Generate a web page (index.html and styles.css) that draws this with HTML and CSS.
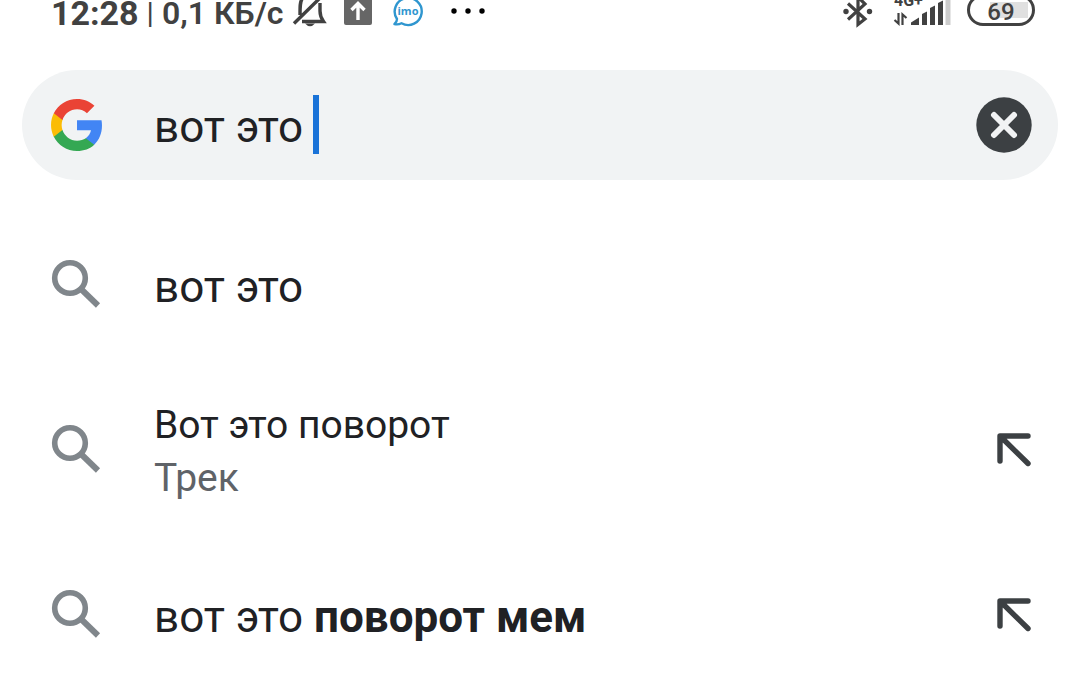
FILE: index.html
```html
<!DOCTYPE html>
<html lang="ru">
<head>
  <meta charset="UTF-8">
  <meta name="viewport" content="width=device-width, initial-scale=1.0">
  <title>вот это</title>
  <link rel="stylesheet" href="styles.css">
</head>
<body>
  <svg class="sprite" aria-hidden="true">
    <symbol id="search" viewBox="0 0 50 50">
      <circle cx="19" cy="19" r="15.3" fill="none" stroke="#80868b" stroke-width="5.6"/>
      <path d="M30.5 30.5L47 46.5" fill="none" stroke="#80868b" stroke-width="6"/>
    </symbol>
    <symbol id="insert" viewBox="0 0 36 36">
      <path d="M4 30V5H32M4.5 5.5L32 32.5" fill="none" stroke="#3c4043" stroke-width="5.4" stroke-linecap="round" stroke-linejoin="round"/>
    </symbol>
  </svg>

  <header class="status">
    <div class="status-left">
      <span class="time">12:28</span>
      <span class="divider">|</span>
      <span class="speed">0,1 КБ/с</span>
      <svg class="bell" width="36" height="28" viewBox="0 0 36 28" fill="none" stroke="#414141" stroke-width="3.4">
        <path d="M2 23.5L28-2M28 3V11C28 15 29 18 31.5 21.5H10M10-1C8 2 8 6 8 15"/>
        <path d="M13 23.5H23Q18 29 13 23.5Z" fill="#414141" stroke="none"/>
      </svg>
      <svg class="upload" width="28" height="28" viewBox="0 0 28 28">
        <rect y="-3" width="28" height="28" rx="2" fill="#666"/>
        <path d="M14 20V4M7.5 10L14 3.5L20.5 10" fill="none" stroke="#fff" stroke-width="3.4"/>
      </svg>
      <svg class="imo" width="32" height="28" viewBox="0 0 32 28">
        <path d="M5 19A13.5 13.5 0 1 1 9.5 23.2Q6 25 2.5 24Q5 22 5 19Z" fill="none" stroke="#2f96cf" stroke-width="2.4" stroke-linejoin="round"/>
        <text x="16" y="15" text-anchor="middle" class="imo-text">imo</text>
      </svg>
      <svg class="dots" width="36" height="28" viewBox="0 0 36 28">
        <circle cx="4" cy="11" r="2.7"/>
        <circle cx="18" cy="11" r="2.7"/>
        <circle cx="32" cy="11" r="2.7"/>
      </svg>
    </div>
    <div class="status-right">
      <svg width="30" height="28" viewBox="0 0 30 28">
        <path d="M5 3.5L22 19L15 24.5V-3L22 4L5 19.5" fill="none" stroke="#414141" stroke-width="3.2"/>
        <circle cx="3" cy="11.5" r="2.7" fill="#414141"/>
        <circle cx="26.5" cy="11.5" r="2.7" fill="#414141"/>
      </svg>
      <svg class="signal" width="58" height="28" viewBox="0 0 58 28" fill="#414141">
        <text x="1" y="6" class="net">4G+</text>
        <path d="M5.5 13V23.5L1.5 20M9.500 25V14.500L13.5 18" fill="none" stroke="#414141" stroke-width="2.2"/>
        <path d="M18 25V22.5L26 17.5V25ZM29 25V14L34 11.5V25ZM37 25V8L42 5.5V25ZM45 25V3L50 0.5V25Z"/>
        <path d="M52.500 0H57.500V25H52.500Z" fill="#ccc"/>
      </svg>
      <div class="battery">69</div>
    </div>
  </header>

  <main>
    <form class="search" role="search">
      <svg class="google" width="51" height="52" viewBox="1 1 21.56 22" aria-hidden="true">
        <path d="M22.56 12.25c0-.78-.07-1.53-.2-2.25H12v4.26h5.92c-.26 1.37-1.04 2.53-2.21 3.31v2.77h3.57c2.08-1.92 3.28-4.74 3.28-8.09z" fill="#4285f4"/>
        <path d="M12 23c2.97 0 5.46-.98 7.28-2.66l-3.57-2.77c-.98.66-2.23 1.06-3.71 1.06-2.86 0-5.29-1.93-6.16-4.53H2.18v2.84C3.99 20.53 7.7 23 12 23z" fill="#34a853"/>
        <path d="M5.84 14.09c-.22-.66-.35-1.36-.35-2.09s.13-1.43.35-2.09V7.07H2.18C1.43 8.55 1 10.22 1 12s.43 3.45 1.18 4.93l3.66-2.84z" fill="#fbbc05"/>
        <path d="M12 5.38c1.62 0 3.06.56 4.21 1.64l3.15-3.15C17.45 2.09 14.97 1 12 1 7.7 1 3.99 3.47 2.18 7.07l3.66 2.84c.87-2.6 3.3-4.53 6.16-4.53z" fill="#ea4335"/>
      </svg>
      <div class="field">
        <input type="text" value="вот это " aria-label="Поиск" autocomplete="off">
        <span class="caret"></span>
      </div>
      <button class="clear" type="reset" aria-label="Очистить">
        <svg width="56" height="56" viewBox="0 0 56 56">
          <circle cx="28" cy="28" r="27.7" fill="#3c4043"/>
          <path d="M18 18L38 38M38 18L18 38" stroke="#f1f3f4" stroke-width="6" stroke-linecap="round"/>
        </svg>
      </button>
    </form>

    <ul class="results">
      <li>
        <svg class="icon" aria-hidden="true"><use href="#search"/></svg>
        <a href="#" class="query">вот это</a>
      </li>
      <li>
        <svg class="icon" aria-hidden="true"><use href="#search"/></svg>
        <a href="#" class="entity">Вот это поворот<span>Трек</span></a>
        <button class="insert" type="button" aria-label="Вставить запрос"><svg><use href="#insert"/></svg></button>
      </li>
      <li>
        <svg class="icon" aria-hidden="true"><use href="#search"/></svg>
        <a href="#" class="query">вот это <b>поворот мем</b></a>
        <button class="insert" type="button" aria-label="Вставить запрос"><svg><use href="#insert"/></svg></button>
      </li>
    </ul>
  </main>
</body>
</html>
```
FILE: styles.css
```css
* {
  box-sizing: border-box;
}

html {
  overflow: hidden;
}

body {
  margin: 0;
  background: #fff;
  color: #202124;
  font-family: Roboto, sans-serif;
}

button {
  padding: 0;
  border: none;
  background: none;
  cursor: pointer;
}

svg {
  display: block;
  flex-shrink: 0;
}

.sprite {
  position: absolute;
  width: 0;
  height: 0;
}

/* status bar */
.status {
  display: flex;
  justify-content: space-between;
  height: 28px;
  margin-bottom: 42px;
  padding: 0 45px 0 51px;
  color: #414141;
}

.status-left,
.status-right {
  display: flex;
  align-items: center;
  line-height: 26px;
}

.status-left {
  font-size: 32px;
  font-weight: bold;
}

.status-left span {
  padding-bottom: 2px;
}

.time {
  font-size: 34px;
}

.divider {
  margin: 0 8px;
  font-size: 30px;
  font-weight: normal;
}

.speed {
  font-weight: 600;
}

.bell {
  margin-left: 8px;
}

.upload {
  margin-left: 16px;
}

.imo {
  margin-left: 20px;
}

.imo-text {
  fill: #2f96cf;
  font: bold 11px "Open Sans", sans-serif;
}

.dots {
  margin-left: 26px;
  fill: #000;
}

.signal {
  margin: 0 16px 0 20px;
}

.net {
  font: bold 16px Roboto, sans-serif;
}

.battery {
  align-self: flex-start;
  width: 68px;
  height: 32px;
  margin-top: -6px;
  border: 3px solid #414141;
  border-radius: 16px;
  background: linear-gradient(#e0e0e0, #e0e0e0) 20px 5px / 38px 16px no-repeat;
  font-size: 24px;
  font-weight: 500;
  line-height: 30px;
  text-align: center;
}

/* search box */
.search {
  display: flex;
  align-items: center;
  height: 110px;
  margin: 0 22px 21px;
  padding: 0 26px 0 29px;
  border-radius: 55px;
  background: #f1f3f4;
}

.field {
  position: relative;
  flex: 1;
  margin-left: 52px;
}

.field input {
  display: block;
  width: 100%;
  height: 60px;
  padding: 4px 0 0;
  border: none;
  outline: none;
  background: none;
  color: inherit;
  font: 44px Roboto, sans-serif;
}

.caret {
  position: absolute;
  top: 0;
  left: 159px;
  width: 6px;
  height: 59px;
  background: #1a73d8;
}

/* suggestions */
.results {
  margin: 0;
  padding: 0;
  list-style: none;
}

.results li {
  display: flex;
  align-items: center;
  height: 165px;
  padding: 0 48px 0 51px;
}

.icon {
  width: 50px;
  height: 50px;
}

.results a {
  flex: 1;
  margin-left: 53px;
  padding-top: 7px;
  color: inherit;
  text-decoration: none;
}

.query {
  font-size: 44px;
  line-height: 52px;
}

.entity {
  font-size: 39px;
  line-height: 53px;
}

.entity span {
  display: block;
  color: #5f6368;
}

.insert svg {
  width: 36px;
  height: 36px;
}
```
